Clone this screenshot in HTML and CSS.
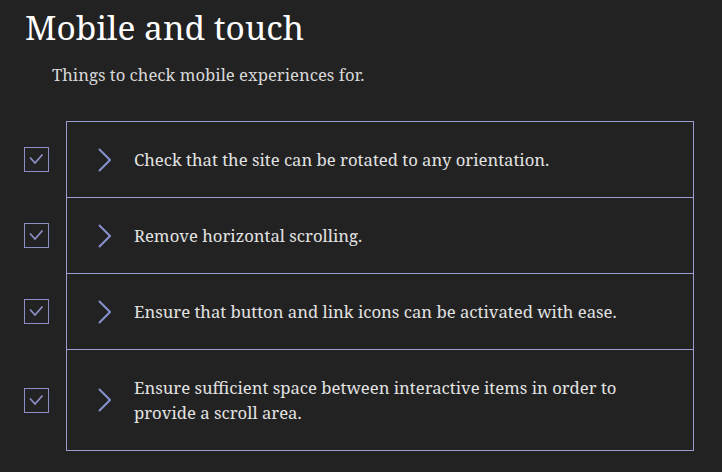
FILE: index.html
```html
<!DOCTYPE html>
<html lang="en">
<head>
<meta charset="utf-8">
<title>Mobile and touch</title>
<link rel="stylesheet" href="styles.css">
</head>
<body>
<main class="page">
  <h1 class="title">Mobile and touch</h1>
  <p class="subtitle">Things to check mobile experiences for.</p>
  <ul class="checklist">
    <li class="row">
      <div class="check-cell"><span class="checkbox"><svg viewBox="0 0 25 25" width="25" height="25"><path d="M6 10.5 L11 16 L18.5 7.5" fill="none" stroke="#8c8fc6" stroke-width="1.8"/></svg></span></div>
      <div class="item"><svg class="chev" viewBox="0 0 13 24" width="13" height="24"><path d="M1 1 L12 12 L1 23" fill="none" stroke="#8a8fd0" stroke-width="2"/></svg><span class="text">Check that the site can be rotated to any orientation.</span></div>
    </li>
    <li class="row">
      <div class="check-cell"><span class="checkbox"><svg viewBox="0 0 25 25" width="25" height="25"><path d="M6 10.5 L11 16 L18.5 7.5" fill="none" stroke="#8c8fc6" stroke-width="1.8"/></svg></span></div>
      <div class="item"><svg class="chev" viewBox="0 0 13 24" width="13" height="24"><path d="M1 1 L12 12 L1 23" fill="none" stroke="#8a8fd0" stroke-width="2"/></svg><span class="text">Remove horizontal scrolling.</span></div>
    </li>
    <li class="row">
      <div class="check-cell"><span class="checkbox"><svg viewBox="0 0 25 25" width="25" height="25"><path d="M6 10.5 L11 16 L18.5 7.5" fill="none" stroke="#8c8fc6" stroke-width="1.8"/></svg></span></div>
      <div class="item"><svg class="chev" viewBox="0 0 13 24" width="13" height="24"><path d="M1 1 L12 12 L1 23" fill="none" stroke="#8a8fd0" stroke-width="2"/></svg><span class="text">Ensure that button and link icons can be activated with ease.</span></div>
    </li>
    <li class="row">
      <div class="check-cell"><span class="checkbox"><svg viewBox="0 0 25 25" width="25" height="25"><path d="M6 10.5 L11 16 L18.5 7.5" fill="none" stroke="#8c8fc6" stroke-width="1.8"/></svg></span></div>
      <div class="item item-last"><svg class="chev" viewBox="0 0 13 24" width="13" height="24"><path d="M1 1 L12 12 L1 23" fill="none" stroke="#8a8fd0" stroke-width="2"/></svg><span class="text">Ensure sufficient space between interactive items in order to provide a scroll area.</span></div>
    </li>
  </ul>
</main>
</body>
</html>
```
FILE: styles.css
```css
html, body {
  margin: 0;
  padding: 0;
  background: #222222;
}
body {
  font-family: "Noto Serif", "DejaVu Serif", serif;
  color: #e2e2e2;
}
.page {
  padding: 5px 0 0 0;
}
.title {
  margin: 0;
  padding-left: 25px;
  font-size: 33.5px;
  line-height: 44px;
  font-weight: 400;
  color: #ffffff;
}
.subtitle {
  margin: 14px 0 0 0;
  padding-left: 52px;
  font-size: 16.7px;
  line-height: 24px;
  color: #d8d8d8;
}
.checklist {
  list-style: none;
  margin: 34px 0 0 0;
  padding: 0;
}
.row {
  display: flex;
}
.check-cell {
  width: 66px;
  display: flex;
  align-items: center;
  padding-left: 24px;
  box-sizing: border-box;
}
.checkbox {
  width: 25px;
  height: 25px;
  box-sizing: border-box;
  border: 1px solid #8c8fc6;
  display: block;
  position: relative;
}
.checkbox svg {
  position: absolute;
  left: -1px;
  top: -1px;
}
.item {
  width: 628px;
  box-sizing: border-box;
  border: 1px solid #9a9dd2;
  border-bottom: none;
  display: flex;
  align-items: center;
  padding: 25px 40px 25px 31px;
  min-height: 76px;
}
.item-last {
  border-bottom: 1px solid #9a9dd2;
}
.chev {
  flex: none;
  display: block;
}
.text {
  margin-left: 23px;
  font-size: 16.7px;
  line-height: 25px;
  color: #e2e2e2;
}
```
